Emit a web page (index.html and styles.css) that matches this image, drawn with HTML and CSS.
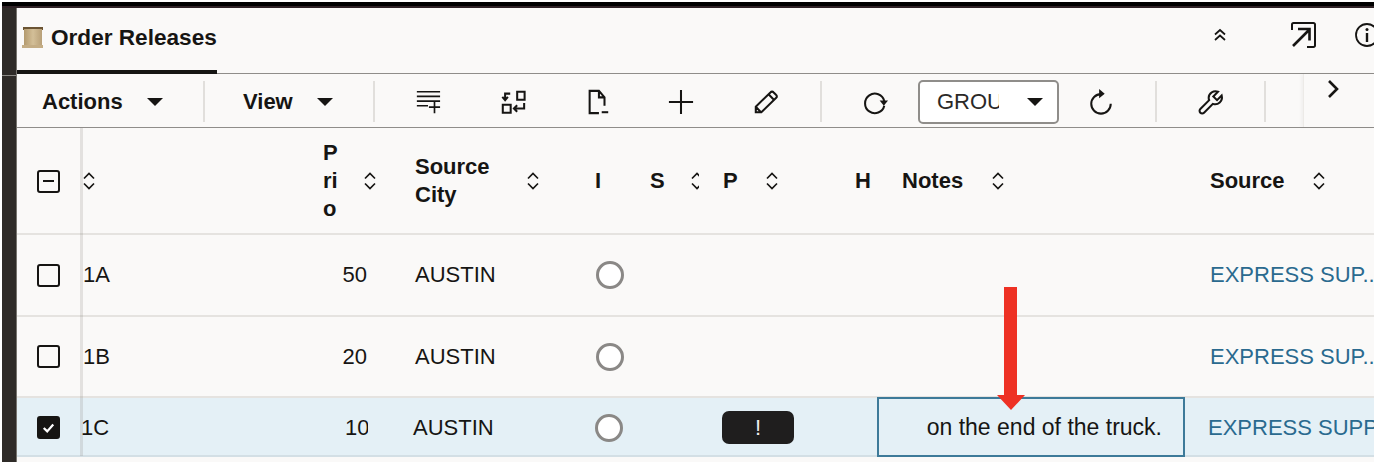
FILE: index.html
```html
<!DOCTYPE html>
<html lang="en">
<head>
<meta charset="utf-8">
<title>Order Releases</title>
<link rel="stylesheet" href="styles.css">
</head>
<body>
<svg class="defs" width="0" height="0" aria-hidden="true">
  <symbol id="sort" viewBox="0 0 14 20"><path d="M2 7.5 7 2.5l5 5M2 12.5l5 5 5-5" fill="none" stroke="#161513" stroke-width="1.7"/></symbol>
</svg>
<div class="topbar"></div>
<div class="frame">
  <div class="rail"></div>
  <main class="panel">
    <header class="titlebar">
      <div class="tab">
        <svg class="scroll" viewBox="0 0 22 22">
          <defs><linearGradient id="paper" x1="0" x2="1" y1="0" y2="0"><stop offset="0" stop-color="#b39a6e"/><stop offset=".5" stop-color="#d3bf98"/><stop offset="1" stop-color="#b8a078"/></linearGradient></defs>
          <rect x="1" y="1" width="20" height="3" fill="#6b5433"/>
          <rect x="2" y="3" width="18" height="17" fill="url(#paper)"/>
          <rect x="0" y="19" width="21" height="3" fill="#c4ad85"/>
        </svg>
        <h1 class="title">Order Releases</h1>
      </div>
      <svg class="ticon up2" viewBox="0 0 14 14"><path d="M2 6.5 7 2l5 4.5M2 12l5-4.5 5 4.5" fill="none" stroke="#161513" stroke-width="1.7"/></svg>
      <svg class="ticon ext" viewBox="0 0 26 26"><path d="M2 8V2.500A1.500 1.500 0 0 1 3.500 1h20A1.500 1.500 0 0 1 25 2.500v21a1.500 1.500 0 0 1-1.500 1.500H17" fill="none" stroke="#161513" stroke-width="2"/><path d="M3 24 19 8M8 7h11.500v11.500" fill="none" stroke="#161513" stroke-width="2.600"/></svg>
      <svg class="ticon info" viewBox="0 0 24 24"><circle cx="12" cy="12" r="11" fill="none" stroke="#161513" stroke-width="1.800"/><circle cx="12" cy="6.500" r="1.500" fill="#161513"/><path d="M12 10v9" stroke="#161513" stroke-width="2.400"/></svg>
    </header>

    <nav class="toolbar">
      <div class="menu menu-actions"><span>Actions</span><i class="caret"></i></div>
      <div class="sep"></div>
      <div class="menu menu-view"><span>View</span><i class="caret"></i></div>
      <div class="sep"></div>
      <svg class="icon i-first" viewBox="0 0 28 28"><path d="M2 3h25M2 8h25M2 13h25M2 18h12" stroke="#161513" stroke-width="1.800" fill="none"/><path d="M21 13v13M15 19.500h12" stroke="#161513" stroke-width="1.800" fill="none"/></svg>
      <svg class="icon i-gap" viewBox="0 0 28 28"><path d="M18.500 3h8v8.500h-8zM3 17h8.500v8.500H3z" fill="none" stroke="#161513" stroke-width="2.200"/><path d="M11 5H5.500v7M2.500 8.500l3 3.500 3-3.500M26 15v6H15M18.500 17.500 15 21l3.500 3.500" fill="none" stroke="#161513" stroke-width="2.200"/></svg>
      <svg class="icon i-gap" viewBox="0 0 28 28"><path d="M15 26H5V2h10l6 7v9M15 2v7h6" fill="none" stroke="#161513" stroke-width="2.200"/><path d="M18 25h7" stroke="#161513" stroke-width="2.200"/></svg>
      <svg class="icon i-plus" viewBox="0 0 28 28"><path d="M14 1v26M1 14h26" stroke="#161513" stroke-width="2.200"/></svg>
      <svg class="icon i-gap" viewBox="0 0 28 28"><path d="M3 25V19L19 3.500a2 2 0 0 1 3 0L25 6.500a2 2 0 0 1 0 3L9 25zM17 6l5.500 5.500M3.500 19.500 8.500 25" fill="none" stroke="#161513" stroke-width="2.200"/></svg>
      <div class="sep sep-a"></div>
      <svg class="icon i-refresh" viewBox="0 0 28 28"><path d="M24 13A10.500 10.500 0 1 0 24 18" fill="none" stroke="#161513" stroke-width="2.200"/><path d="M19 12.500h9L23.500 18z" fill="#161513"/></svg>
      <div class="select"><span class="select-text">GROUP</span><i class="caret"></i></div>
      <svg class="icon i-undo" viewBox="0 0 28 28"><path d="M14 5.500A10.500 10.500 0 1 0 24.500 16" fill="none" stroke="#161513" stroke-width="2.200"/><path d="M12 0v10l6-5z" fill="#161513"/></svg>
      <div class="sep sep-b"></div>
      <svg class="icon i-wrench" viewBox="0 0 28 28"><path d="M25.500 7 20.500 12 16.500 8l5-5C17 1.500 11.500 4 11.500 9.500c0 1 .2 2 .5 2.500L2.500 21.500a2.800 2.800 0 0 0 4 4L16 16c5.500 2 11-3 9.500-9z" fill="none" stroke="#161513" stroke-width="2.200"/></svg>
      <div class="sep sep-c"></div>
      <div class="overflow"><svg class="chev" viewBox="0 0 12 20"><path d="M2 2l8 8-8 8" fill="none" stroke="#161513" stroke-width="2.600"/></svg></div>
    </nav>

    <section class="table">
      <div class="grid head">
        <div class="cell c-check"><span class="box box-mixed"><i></i></span></div>
        <div class="cell c-id"><svg class="sort sort-id"><use href="#sort"/></svg></div>
        <div class="cell c-prio"><span class="h-prio">Prio</span><svg class="sort sort-prio"><use href="#sort"/></svg></div>
        <div class="cell c-city"><span class="h-city">Source City</span><svg class="sort"><use href="#sort"/></svg></div>
        <div class="cell c-i"><span>I</span></div>
        <div class="cell c-s"><span>S</span><span class="sort-clip"><svg class="sort"><use href="#sort"/></svg></span></div>
        <div class="cell c-p"><span>P</span><svg class="sort sort-p"><use href="#sort"/></svg></div>
        <div class="cell c-h"><span>H</span></div>
        <div class="cell c-notes"><span>Notes</span><svg class="sort sort-notes"><use href="#sort"/></svg></div>
        <div class="cell c-source"><span>Source</span><svg class="sort sort-source"><use href="#sort"/></svg></div>
      </div>

      <div class="grid row row-first">
        <div class="cell c-check"><span class="box"></span></div>
        <div class="cell c-id">1A</div>
        <div class="cell c-prio num">50</div>
        <div class="cell c-city">AUSTIN</div>
        <div class="cell c-i"><span class="radio"></span></div>
        <div class="cell c-s"></div>
        <div class="cell c-p"></div>
        <div class="cell c-h"></div>
        <div class="cell c-notes"></div>
        <div class="cell c-source link">EXPRESS SUP...</div>
      </div>

      <div class="grid row">
        <div class="cell c-check"><span class="box"></span></div>
        <div class="cell c-id">1B</div>
        <div class="cell c-prio num">20</div>
        <div class="cell c-city">AUSTIN</div>
        <div class="cell c-i"><span class="radio"></span></div>
        <div class="cell c-s"></div>
        <div class="cell c-p"></div>
        <div class="cell c-h"></div>
        <div class="cell c-notes"></div>
        <div class="cell c-source link">EXPRESS SUP...</div>
      </div>

      <div class="grid row selected">
        <div class="cell c-check"><span class="box box-on"><svg viewBox="0 0 22 22"><path d="M5.500 11.500l4 4 7-8" fill="none" stroke="#fff" stroke-width="2.600"/></svg></span></div>
        <div class="cell c-id">1C</div>
        <div class="cell c-prio num"><span class="num-clip">10</span></div>
        <div class="cell c-city">AUSTIN</div>
        <div class="cell c-i"><span class="radio"></span></div>
        <div class="cell c-s"></div>
        <div class="cell c-p"><span class="badge">!</span></div>
        <div class="cell c-h"></div>
        <div class="cell c-notes note-focus">on the end of the truck.</div>
        <div class="cell c-source link">EXPRESS SUPPLIER</div>
      </div>
    </section>
  </main>
</div>
<svg class="arrow" viewBox="0 0 28 123"><path d="M7 0h13v108h8l-14 15L0 108h7z" fill="#ee3124"/></svg>
</body>
</html>
```

FILE: styles.css
```css
* { box-sizing: border-box; }
html, body { margin: 0; height: 100%; }
body {
  width: 1376px;
  height: 462px;
  background: #fff;
  overflow: hidden;
  position: relative;
  font-family: "Liberation Sans", Arial, sans-serif;
  font-size: 22px;
  color: #161513;
  padding: 2px 2px 0;
}
.defs { position: absolute; }
.topbar { height: 6px; background: #000; border-bottom: 2px solid #2f2226; }
.frame { display: flex; height: 454px; }
.rail {
  width: 15px;
  flex: none;
  background: linear-gradient(#2f2b28 67px, #8b8985 67px, #8b8985 68px, #2f2b28 68px);
  border-right: 1px solid #77746f;
}
.panel { flex: 1; min-width: 0; background: #faf9f8; overflow: hidden; }

.titlebar {
  height: 66px;
  display: flex;
  align-items: flex-start;
  border-bottom: 1px solid #8f8d8a;
}
.tab {
  width: 200px;
  height: 66px;
  flex: none;
  display: flex;
  align-items: center;
  padding: 0 0 2px 5px;
  border-bottom: 4px solid #161513;
}
.scroll { width: 22px; height: 22px; flex: none; margin-bottom: 2px; }
.title { margin: 0 0 0 7px; font-size: 22.600px; font-weight: 700; line-height: 26px; white-space: nowrap; }
.ticon { display: block; flex: none; }
.up2 { width: 14px; height: 14px; margin: 20px 0 0 996px; }
.ext { width: 26px; height: 26px; margin: 14px 0 0 63px; }
.info { width: 24px; height: 24px; margin: 15px 0 0 39px; }

.toolbar {
  height: 54px;
  padding-top: 3px;
  display: flex;
  align-items: center;
  border-bottom: 1px solid #8f8d8a;
}
.menu { display: flex; align-items: center; height: 100%; flex: none; font-weight: 700; }
.menu-actions { width: 186px; padding-left: 25px; }
.menu-actions .caret { margin-left: 24px; }
.menu-view { width: 168px; padding-left: 38px; }
.menu-view .caret { margin-left: 24px; }
.caret {
  display: block;
  width: 0;
  height: 0;
  flex: none;
  border-left: 8.500px solid transparent;
  border-right: 8.500px solid transparent;
  border-top: 8.500px solid #161513;
}
.sep { width: 2px; height: 41px; flex: none; background: #e1dfdc; margin-top: -2px; }
.icon { width: 26px; height: 26px; flex: none; display: block; }
.i-first { margin-left: 40px; }
.i-gap { margin-left: 59px; }
.i-plus { margin-left: 57px; }
.sep-a { margin-left: 41px; }
.i-refresh { margin-left: 40px; }
.select {
  width: 141px;
  height: 44px;
  flex: none;
  margin-left: 30px;
  display: flex;
  align-items: center;
  background: #fff;
  border: 2px solid #8f8d8a;
  border-radius: 5px;
  padding-left: 17px;
}
.select-text { width: 62px; overflow: hidden; white-space: nowrap; font-size: 22px; color: #2b2927; }
.select .caret { margin-left: 28px; }
.i-undo { margin-left: 29px; }
.sep-b { margin-left: 41px; }
.i-wrench { margin-left: 41px; }
.sep-c { margin-left: 40px; }
.overflow {
  width: 71px;
  height: 53px;
  flex: none;
  margin: -3px 0 0 37px;
  border-left: 1px solid #eceae7;
  box-shadow: -2px 0 3px rgba(0, 0, 0, .04);
  padding: 5px 0 0 23px;
}
.chev { width: 12px; height: 20px; display: block; }

.table { position: relative; height: 330px; overflow: hidden; }
.table::before {
  content: "";
  position: absolute;
  z-index: 2;
  left: 63px;
  top: 0;
  bottom: 2px;
  width: 3px;
  background: rgba(120, 115, 110, .18);
}
.grid {
  display: grid;
  grid-template-columns: 64px 232px 79px 183px 65px 73px 132px 34px 308px 1fr;
  border-bottom: 2px solid #e5e3e0;
}
.head { height: 107px; padding-top: 1px; font-weight: 700; line-height: 28px; }
.row { height: 81px; }
.row-first { height: 82px; }
.selected {
  height: 59px;
  background: #e4f0f6;
  grid-template-columns: 62px 232px 79px 183px 65px 73px 132px 34px 308px 1fr;
  border-bottom-color: #d3dfe5;
}
.cell { display: flex; align-items: center; min-width: 0; white-space: nowrap; overflow: hidden; }

.c-check { justify-content: flex-start; padding-left: 20px; }
.c-id { padding-left: 2px; }
.head .c-id { padding-left: 1px; }
.c-prio { padding-left: 10px; }
.num { justify-content: flex-end; padding-right: 25px; }
.c-city { padding-left: 23px; }
.c-i { padding-left: 21px; }
.c-s { padding-left: 10px; }
.c-p { padding-left: 10px; }
.c-h { padding-left: 10px; }
.c-notes { padding-left: 23px; }
.c-source { padding-left: 23px; }
.head .c-i { padding-left: 20px; }

.sort { width: 14px; height: 20px; display: block; flex: none; }
.sort-prio { margin-left: 20px; }
.h-prio { width: 20px; white-space: normal; word-break: break-all; }
.h-city { width: 96px; margin-right: 15px; white-space: normal; }
.sort-clip { width: 9px; height: 20px; overflow: hidden; margin-left: 25px; flex: none; }
.sort-p { margin-left: 27px; }
.sort-notes { margin-left: 28px; }
.sort-source { margin-left: 27px; }

.box {
  width: 23px;
  height: 23px;
  flex: none;
  display: flex;
  align-items: center;
  justify-content: center;
  border: 2px solid #161513;
  border-radius: 3px;
}
.box-mixed i { display: block; width: 11px; height: 2px; background: #161513; }
.box-on { background: #161513; }
.box-on svg { width: 19px; height: 19px; display: block; }

.radio {
  display: block;
  width: 28px;
  height: 28px;
  border-radius: 50%;
  background: #fff;
  border: 3px solid #8a8886;
}
.selected .c-i { padding-left: 22px; }
.selected .num { padding-right: 22px; }
.num-clip { display: block; width: 23px; overflow: hidden; }
.selected .c-p { padding-left: 11px; }
.badge {
  width: 72px;
  height: 33px;
  background: #1f1e1e;
  border-radius: 7px;
  color: #f0efee;
  display: flex;
  align-items: center;
  justify-content: center;
}
.note-focus {
  justify-content: flex-end;
  padding: 0 21px 0 0;
  border: 2px solid #3d7a99;
  margin-top: -1px;
  height: 60px;
  font-size: 23px;
}
.link { color: #2a6a8f; }

.arrow {
  position: absolute;
  left: 997px;
  top: 287px;
  width: 28px;
  height: 123px;
}
```
